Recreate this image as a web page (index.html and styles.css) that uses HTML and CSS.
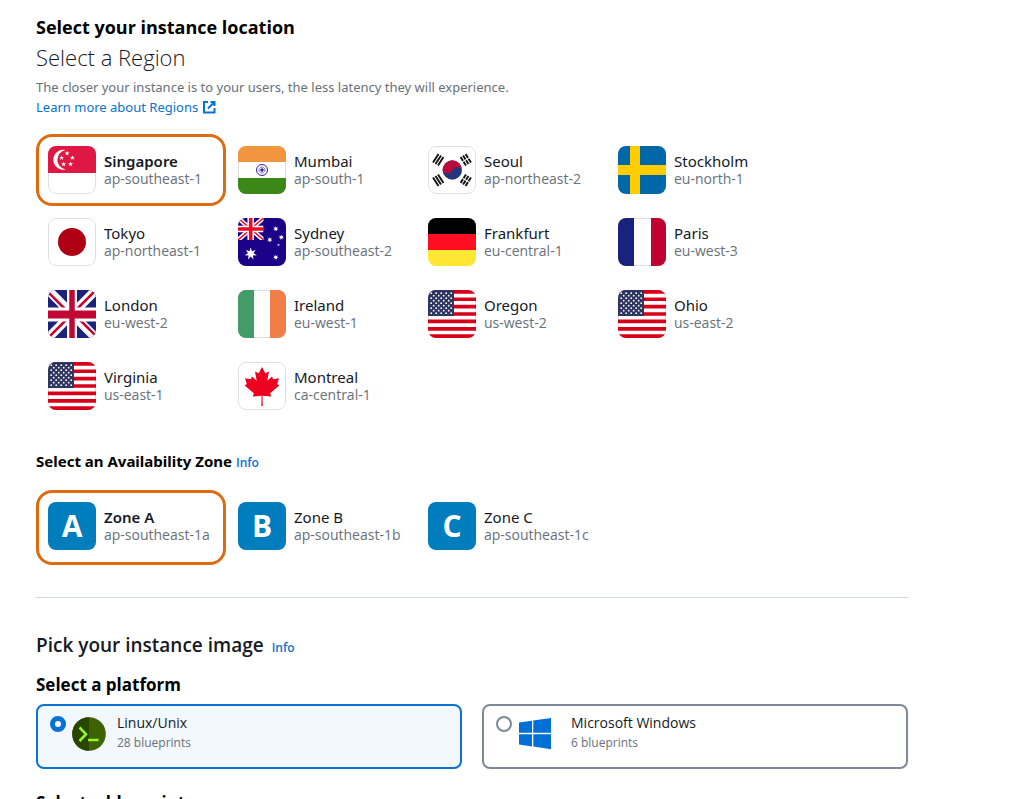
FILE: index.html
```html
<!DOCTYPE html>
<html lang="en">
<head>
<meta charset="utf-8">
<title>Create an instance</title>
<link rel="stylesheet" href="styles.css">
</head>
<body>
<svg class="sprite" aria-hidden="true">
  <symbol id="plate" viewBox="0 0 48 48">
    <rect width="48" height="48" fill="#fff"/>
    <rect x=".5" y=".5" width="47" height="47" rx="7.500" fill="none" stroke="#dedede"/>
  </symbol>
  <symbol id="star5" viewBox="-10 -10 20 20">
    <path d="M0-10 2.400-3.200 9.500-3.100 3.800 1.200 5.900 8.100 0 4-5.900 8.100-3.800 1.200-9.500-3.100-2.400-3.200Z" fill="#fff"/>
  </symbol>
  <symbol id="star7" viewBox="-10 -10 20 20">
    <path d="M0-10 1.950-4.050 7.800-6.200 4.400-1 9.750 2.200 3.500 2.800 4.300 9 0 4.500-4.300 9-3.500 2.800-9.750 2.200-4.400-1-7.800-6.200-1.950-4.050Z" fill="#fff"/>
  </symbol>
  <symbol id="flag-us" viewBox="0 0 48 48">
    <defs>
      <pattern id="stars" x="2" y="2" width="5" height="5" patternUnits="userSpaceOnUse">
        <circle cx="3.700" cy="3.700" r=".9" fill="#fff"/>
        <circle cx="1.200" cy="1.200" r=".9" fill="#fff"/>
      </pattern>
    </defs>
    <use href="#plate"/>
    <path d="M0 1.850H48M0 9.250H48M0 16.650H48M0 24H48M0 31.400H48M0 38.800H48M0 46.200H48" stroke="#d80019" stroke-width="3.700"/>
    <rect width="26" height="26" fill="#2e3561"/>
    <rect x="2" y="2" width="22.500" height="22.500" fill="url(#stars)"/>
  </symbol>
</svg>
<main class="page">
  <h1 class="title">Select your instance location</h1>
  <h2 class="subtitle">Select a Region</h2>
  <p class="description">The closer your instance is to your users, the less latency they will experience.</p>
  <a class="link" href="#regions">Learn more about Regions
    <svg class="external" viewBox="0 0 14 14" aria-hidden="true"><path d="M6 2H2v10.500h10.500V8M8.500 2H12.500V6M12 2.500 6 8.500" fill="none" stroke="currentColor" stroke-width="2"/></svg></a>

  <div class="options" id="regions">
    <button class="option selected" type="button" aria-pressed="true">
      <svg class="tile" viewBox="0 0 48 48" aria-hidden="true"><use href="#plate"/><rect width="48" height="27" fill="#de1743"/><path d="M17.500 4A10 10 0 1 0 17.500 23.500A9.900 9.900 0 0 1 17.500 4Z" fill="#fff"/><use href="#star5" x="16.500" y="4.800" width="5.200" height="5.200"/><use href="#star5" x="11" y="9.200" width="5.200" height="5.200"/><use href="#star5" x="21.800" y="9.200" width="5.200" height="5.200"/><use href="#star5" x="13" y="15.500" width="5.200" height="5.200"/><use href="#star5" x="20" y="15.500" width="5.200" height="5.200"/></svg>
      <span class="label"><span class="name">Singapore</span><span class="code">ap-southeast-1</span></span>
    </button>
    <button class="option" type="button" aria-pressed="false">
      <svg class="tile" viewBox="0 0 48 48" aria-hidden="true"><use href="#plate"/><path d="M0 0H48V16H0Z" fill="#f2953f"/><path d="M0 32H48V48H0Z" fill="#3b8718"/><g fill="none" stroke="#30209a"><circle cx="24" cy="24" r="5.500"/><circle cx="24" cy="24" r="3" stroke-dasharray="1 .6"/></g><circle cx="24" cy="24" r="1.700" fill="#30209a"/></svg>
      <span class="label"><span class="name">Mumbai</span><span class="code">ap-south-1</span></span>
    </button>
    <button class="option" type="button" aria-pressed="false">
      <svg class="tile" viewBox="0 0 48 48" aria-hidden="true"><use href="#plate"/><circle cx="24.300" cy="24" r="9.700" fill="#24377d"/><path d="M14.600 24.500A9.700 9.700 0 0 1 34 24A5 4 0 0 0 24.300 24A5 4 0 0 1 14.600 24.500Z" fill="#bd0a3a"/><g fill="none" stroke="#111" stroke-width="1.900"><path d="M5 16.500 10.500 8M7.500 18 13 9.500M10 19.500 15.500 11"/><path d="M43 31.500 37.500 40M40.500 30 35 38.500M38 28.500 32.500 37" stroke-dasharray="4.500 1"/><path d="M43 16.500 37.500 8M40.500 18 35 9.500M38 19.500 32.500 11" stroke-dasharray="4.500 1"/><path d="M5 31.500 10.500 40M7.500 30 13 38.500M10 28.500 15.500 37"/></g></svg>
      <span class="label"><span class="name">Seoul</span><span class="code">ap-northeast-2</span></span>
    </button>
    <button class="option" type="button" aria-pressed="false">
      <svg class="tile" viewBox="0 0 48 48" aria-hidden="true"><path d="M0 0H48V48H0Z" fill="#0068a8"/><path d="M12 0H22V19H48V29H22V48H12V29H0V19H12Z" fill="#fc0"/></svg>
      <span class="label"><span class="name">Stockholm</span><span class="code">eu-north-1</span></span>
    </button>
    <button class="option" type="button" aria-pressed="false">
      <svg class="tile" viewBox="0 0 48 48" aria-hidden="true"><use href="#plate"/><circle cx="24" cy="24" r="14" fill="#af0015"/></svg>
      <span class="label"><span class="name">Tokyo</span><span class="code">ap-northeast-1</span></span>
    </button>
    <button class="option" type="button" aria-pressed="false">
      <svg class="tile" viewBox="0 0 48 48" aria-hidden="true"><path d="M0 0H48V48H0Z" fill="#1b0088"/><svg width="25.500" height="22" viewBox="0 0 25.500 22"><path d="M0 0 25.500 22M25.500 0 0 22" stroke="#fff" stroke-width="4.500"/><path d="M0 0 25.500 22M25.500 0 0 22" stroke="#f00a28" stroke-width="1.500"/><path d="M12.700 0V22M0 11H25.500" stroke="#fff" stroke-width="6.500"/><path d="M12.700 0V22M0 11H25.500" stroke="#f00a28" stroke-width="3.600"/></svg><use href="#star7" x="6.500" y="29.500" width="12.500" height="12.500"/><use href="#star7" x="35" y="8" width="5.600" height="5.600"/><use href="#star7" x="29" y="19" width="5.600" height="5.600"/><use href="#star7" x="40.500" y="16.500" width="5.600" height="5.600"/><use href="#star7" x="35" y="36.500" width="5.600" height="5.600"/><use href="#star5" x="39" y="25.500" width="3" height="3"/></svg>
      <span class="label"><span class="name">Sydney</span><span class="code">ap-southeast-2</span></span>
    </button>
    <button class="option" type="button" aria-pressed="false">
      <svg class="tile" viewBox="0 0 48 48" aria-hidden="true"><path d="M0 0H48V16H0Z"/><path d="M0 16H48V32H0Z" fill="#ff0d20"/><path d="M0 32H48V48H0Z" fill="#ffe733"/></svg>
      <span class="label"><span class="name">Frankfurt</span><span class="code">eu-central-1</span></span>
    </button>
    <button class="option" type="button" aria-pressed="false">
      <svg class="tile" viewBox="0 0 48 48" aria-hidden="true"><use href="#plate"/><path d="M0 0H16V48H0Z" fill="#1a237b"/><path d="M33 0H48V48H33Z" fill="#bf0030"/></svg>
      <span class="label"><span class="name">Paris</span><span class="code">eu-west-3</span></span>
    </button>
    <button class="option" type="button" aria-pressed="false">
      <svg class="tile" viewBox="0 0 48 48" aria-hidden="true"><path d="M0 0H48V48H0Z" fill="#1a237b"/><path d="M0 0 48 48M48 0 0 48" stroke="#fff" stroke-width="9"/><path d="M-1 1 18 20M49-1 28 20M20 28-1 49M30 28 49 47" stroke="#c20734" stroke-width="2.600"/><path d="M24 0V48" stroke="#fff" stroke-width="10"/><path d="M0 24.500H48" stroke="#fff" stroke-width="14"/><path d="M24 0V48" stroke="#c20734" stroke-width="5.500"/><path d="M0 24.500H48" stroke="#c20734" stroke-width="8"/></svg>
      <span class="label"><span class="name">London</span><span class="code">eu-west-2</span></span>
    </button>
    <button class="option" type="button" aria-pressed="false">
      <svg class="tile" viewBox="0 0 48 48" aria-hidden="true"><use href="#plate"/><path d="M0 0H16V48H0Z" fill="#439b65"/><path d="M32 0H48V48H32Z" fill="#f17e46"/></svg>
      <span class="label"><span class="name">Ireland</span><span class="code">eu-west-1</span></span>
    </button>
    <button class="option" type="button" aria-pressed="false">
      <svg class="tile" viewBox="0 0 48 48" aria-hidden="true"><use href="#flag-us"/></svg>
      <span class="label"><span class="name">Oregon</span><span class="code">us-west-2</span></span>
    </button>
    <button class="option" type="button" aria-pressed="false">
      <svg class="tile" viewBox="0 0 48 48" aria-hidden="true"><use href="#flag-us"/></svg>
      <span class="label"><span class="name">Ohio</span><span class="code">us-east-2</span></span>
    </button>
    <button class="option" type="button" aria-pressed="false">
      <svg class="tile" viewBox="0 0 48 48" aria-hidden="true"><use href="#flag-us"/></svg>
      <span class="label"><span class="name">Virginia</span><span class="code">us-east-1</span></span>
    </button>
    <button class="option" type="button" aria-pressed="false">
      <svg class="tile" viewBox="0 0 48 48" aria-hidden="true"><use href="#plate"/><path d="M24 5 27.300 11.300 31 9.500 29.300 18.800 34 14.500 35.200 17.200 41 16.200 39.200 22 41.300 23.500 32.200 31.200 33.200 34.500 24.500 33.800 24.700 44H23.300L23.500 33.800 14.800 34.500 15.800 31.200 6.700 23.500 8.800 22 7 16.200 12.800 17.200 14 14.500 18.700 18.800 17 9.500 20.700 11.300Z" fill="#ee0020"/></svg>
      <span class="label"><span class="name">Montreal</span><span class="code">ca-central-1</span></span>
    </button>
  </div>

  <div class="zone-heading"><h3 class="heading-small">Select an Availability Zone</h3><a class="info" href="#zones">Info</a></div>
  <div class="options zones" id="zones">
    <button class="option selected" type="button" aria-pressed="true"><span class="tile letter">A</span><span class="label"><span class="name">Zone A</span><span class="code">ap-southeast-1a</span></span></button>
    <button class="option" type="button" aria-pressed="false"><span class="tile letter">B</span><span class="label"><span class="name">Zone B</span><span class="code">ap-southeast-1b</span></span></button>
    <button class="option" type="button" aria-pressed="false"><span class="tile letter">C</span><span class="label"><span class="name">Zone C</span><span class="code">ap-southeast-1c</span></span></button>
  </div>

  <hr class="divider">

  <div class="image-heading"><h2 class="section-title">Pick your instance image</h2><a class="info" href="#platforms">Info</a></div>
  <h3 class="heading">Select a platform</h3>
  <div class="platforms" id="platforms">
    <label class="platform" for="linux">
      <input class="radio" type="radio" name="platform" id="linux" checked>
      <svg class="logo" viewBox="0 0 34 34" aria-hidden="true"><circle cx="17" cy="17" r="16.800" fill="#3d6300"/><path d="M17 .2A16.800 16.800 0 0 0 17 33.800Z" fill="#284600"/><path d="M7.500 10.500 14 17.200 7.500 24M16 23H26.500" fill="none" stroke="#95f52b" stroke-width="2.600"/></svg>
      <span class="platform-text"><span class="platform-name">Linux/Unix</span><span class="count">28 blueprints</span></span>
    </label>
    <label class="platform" for="windows">
      <input class="radio" type="radio" name="platform" id="windows">
      <svg class="logo logo-wide" viewBox="0 0 34 34" aria-hidden="true"><path d="M1 5.600 14 3.700V15.700H1ZM15.300 3.500 33 1V15.700H15.300ZM1 17.300H14V29.400L1 27.500ZM15.300 17.300H33V32.300L15.300 29.600Z" fill="#006fd6"/></svg>
      <span class="platform-text"><span class="platform-name">Microsoft Windows</span><span class="count">6 blueprints</span></span>
    </label>
  </div>
  <h3 class="heading">Select a blueprint</h3>
</main>
</body>
</html>
```

FILE: styles.css
```css
* { box-sizing: border-box; }

body {
  margin: 0;
  height: 100vh;
  overflow: hidden;
  background: #fff;
  color: #16191f;
  font-family: "Open Sans", "Noto Sans", sans-serif;
  font-size: 14px;
  line-height: 20px;
}

h1, h2, h3, p { margin: 0; }
a { color: #0972d3; text-decoration: none; }
.sprite { position: absolute; width: 0; height: 0; }
.page { padding: 14px 114px 0 36px; }

.title { font-size: 18px; line-height: 26px; font-weight: 700; color: #000; }
.section-title { font-size: 19px; line-height: 26px; font-weight: 600; }
.subtitle { margin-top: 3px; font-size: 22px; line-height: 28px; font-weight: 300; }
.description { margin-top: 6px; color: #687078; }
.link { display: flex; align-items: center; gap: 4px; }
.external { width: 14px; height: 14px; }
.description, .link { font-family: "Noto Sans", "Open Sans", sans-serif; font-size: 13px; }

.options { display: flex; flex-wrap: wrap; margin-top: 17px; }
.option {
  display: flex;
  align-items: center;
  gap: 8px;
  width: 190px;
  padding: 9px;
  border: 3px solid transparent;
  border-radius: 16px;
  background: none;
  color: #16191f;
  font: inherit;
  text-align: left;
}
.option.selected { border-color: #dd6b10; }
.option.selected .name { font-weight: 600; }
.tile { flex: none; width: 48px; height: 48px; border-radius: 8px; overflow: hidden; }
.label { display: flex; flex-direction: column; line-height: 18px; }
.name { font-family: "Noto Sans", "Open Sans", sans-serif; font-size: 15px; }
.code { color: #687078; }

.zone-heading { display: flex; align-items: baseline; gap: 4px; margin-top: 29px; }
.heading-small { font-family: "Noto Sans", "Open Sans", sans-serif; font-size: 15px; line-height: 20px; font-weight: 700; color: #000; }
.info { font-size: 12px; line-height: 12px; font-weight: 600; }
.zones { margin-top: 19px; }
.zones .option { padding-bottom: 12px; }
.letter {
  display: grid;
  place-items: center;
  background: #007dbc;
  color: #fff;
  font-size: 30px;
  font-weight: 700;
}

.divider { margin: 32px 0 34px; border: 0; border-top: 1px solid #d5dbdb; }
.image-heading { display: flex; align-items: baseline; gap: 8px; }
.heading { margin-top: 17px; font-size: 17px; line-height: 20px; font-weight: 700; color: #000; }

.platforms { display: grid; grid-template-columns: 1fr 1fr; gap: 20px; margin: 9px 0 24px; }
.platform {
  display: flex;
  align-items: flex-start;
  height: 65px;
  padding: 7px 12px;
  border: 2px solid #7d8998;
  border-radius: 8px;
}
.platform:has(:checked) { border-color: #0972d3; background: #f2f8fd; }
.radio {
  appearance: none;
  width: 16px;
  height: 16px;
  margin: 3px 6px 0 0;
  border: 2px solid #7d8998;
  border-radius: 50%;
  background: #fff;
}
.radio:checked { border: 5px solid #0972d3; }
.logo { width: 34px; height: 34px; margin: 4px 11px 0 0; }
.logo-wide { margin-right: 19px; }
.platform-text { display: flex; flex-direction: column; }
.count { color: #687078; font-size: 12px; }
```
